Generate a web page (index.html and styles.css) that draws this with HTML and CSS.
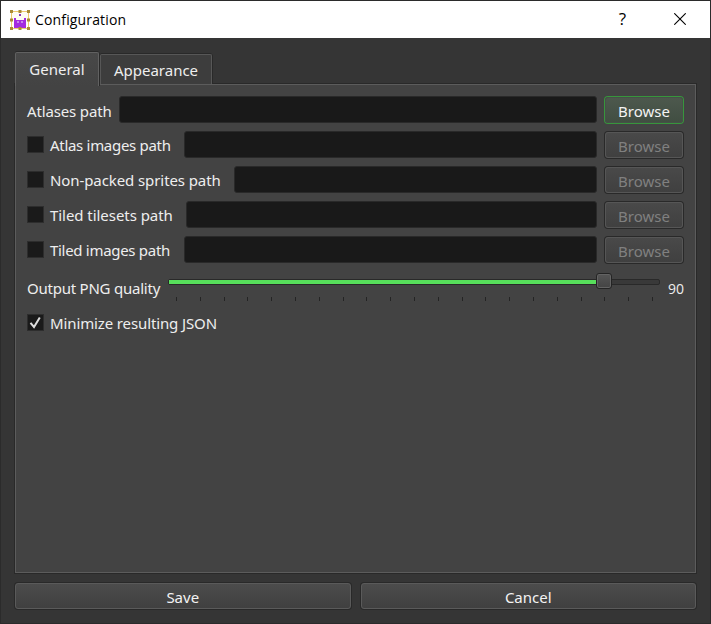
FILE: index.html
```html
<!DOCTYPE html>
<html lang="en">
<head>
<meta charset="utf-8">
<title>Configuration</title>
<link rel="stylesheet" href="styles.css">
</head>
<body>
<div class="window">
  <header class="titlebar">
    <svg class="app-icon" width="20" height="20" viewBox="0 0 20 20">
      <path d="M1.500 1.500h17v17h-17z" fill="#fffdf5" stroke="#f0cc70"/>
      <path d="M4 8h2v2h8V8h2v10H4z" fill="#a32ae0"/>
      <path d="M9 4h2v2H9z" fill="#8d35bd"/>
      <path d="M7 11h2v2H7zM11 11h2v2h-2z" fill="#c983ed"/>
      <path d="M0 0h3v3H0zM8.500 0h3v3h-3zM17 0h3v3h-3zM0 8.500h3v3H0zM17 8.500h3v3h-3zM0 17h3v3H0zM8.500 17h3v3h-3zM17 17h3v3h-3z" fill="#a98b37"/>
    </svg>
    <h1 class="title">Configuration</h1>
    <span class="help">?</span>
    <svg class="close" width="12" height="12" viewBox="0 0 12 12"><path d="M.3.3l11.400 11.400M11.700.3L.3 11.700" stroke="#000" stroke-width="1.100"/></svg>
  </header>
  <main class="client">
    <nav class="tabs">
      <div class="tab active"><span>General</span></div>
      <div class="tab"><span>Appearance</span></div>
    </nav>
    <section class="panel">
      <div class="row"><span class="label t-atlases">Atlases path</span><div class="field"></div><button class="btn browse focused">Browse</button></div>
      <div class="row option w-images"><i class="check"></i><span class="label t-images">Atlas images path</span><div class="field"></div><button class="btn browse" disabled>Browse</button></div>
      <div class="row option w-sprites"><i class="check"></i><span class="label t-sprites">Non-packed sprites path</span><div class="field"></div><button class="btn browse" disabled>Browse</button></div>
      <div class="row option w-tilesets"><i class="check"></i><span class="label t-tilesets">Tiled tilesets path</span><div class="field"></div><button class="btn browse" disabled>Browse</button></div>
      <div class="row option w-images"><i class="check"></i><span class="label t-images">Tiled images path</span><div class="field"></div><button class="btn browse" disabled>Browse</button></div>
      <div class="quality">
        <span class="label t-quality">Output PNG quality</span>
        <div class="slider">
          <div class="groove"><div class="fill"></div></div>
          <div class="handle"></div>
          <div class="ticks"><i></i><i></i><i></i><i></i><i></i><i></i><i></i><i></i><i></i><i></i><i></i><i></i><i></i><i></i><i></i><i></i><i></i><i></i><i></i><i></i><i></i></div>
        </div>
        <span class="value">90</span>
      </div>
      <div class="row option minimize"><i class="check"><svg width="17" height="17" viewBox="0 0 17 17"><path d="M3.500 8.800L7 13L12.800 3.500" fill="none" stroke="#ddd" stroke-width="2"/></svg></i><span class="label t-minimize">Minimize resulting JSON</span></div>
    </section>
    <footer class="actions"><button class="btn">Save</button><button class="btn">Cancel</button></footer>
  </main>
</div>
</body>
</html>
```
FILE: styles.css
```css
* { box-sizing: border-box; }
body { margin: 0; background: #353535; font: 15px/20px "Noto Sans", sans-serif; color: #eee; overflow: hidden; }
.window { width: 711px; height: 624px; border: 1px solid #2b2b2b; display: flex; flex-direction: column; }
.titlebar { height: 37px; background: #fff; color: #000; display: flex; align-items: center; padding: 0 24px 0 9px; }
.app-icon { margin-right: 5px; }
.title { margin: 0; font: 14px/20px "Open Sans", sans-serif; letter-spacing: .15px; white-space: nowrap; }
.help { margin: -2px 48px 0 auto; font: 17px/20px "Open Sans", sans-serif; }
.close { margin-top: -1px; }
.client { flex: 1; display: flex; flex-direction: column; padding: 13px; background: #353535; }
.tabs { display: flex; align-items: flex-end; height: 33px; position: relative; z-index: 1; margin-bottom: -1px; }
.tab { height: 30px; width: 112px; margin-left: 1px; display: flex; align-items: center; justify-content: center; white-space: nowrap; background: #3d3d3d; border: 1px solid #575757; border-bottom: 0; border-radius: 2px 2px 0 0; box-shadow: 0 -1px #292929, 1px 0 #292929; flex-shrink: 0; }
.tab.active { width: 84px; height: 34px; background: linear-gradient(#484848, #434343); padding-bottom: 2px; margin-bottom: -2px; border-color: #616161; }
.panel { flex-shrink: 0; height: 491px; border: 1px solid #292929; background: #434343; box-shadow: inset 0 0 0 1px #5c5c5c; padding: 12px; }
.row { display: flex; height: 28px; margin-bottom: 7px; }
.label { white-space: nowrap; line-height: 28px; flex: none; }
.row > .t-atlases { width: 92px; padding-top: 1px; letter-spacing: -.15px; }
.t-images { letter-spacing: -.3px; }
.t-sprites { letter-spacing: -.09px; }
.t-tilesets { letter-spacing: -.05px; }
.t-quality { letter-spacing: -.23px; }
.t-minimize { letter-spacing: -.12px; }
.check { width: 17px; height: 17px; margin: 5px 6px 0 0; flex: none; border: 1px solid #2d2d2d; background: #1a1a1a; }
.check svg { display: block; margin: -1px; }
.w-images .label { width: 134px; }
.w-sprites .label { width: 184px; }
.w-tilesets .label { width: 136px; }
.field { flex: 1; height: 27px; border: 1px solid #292929; border-radius: 3px; background: #191919; margin-right: 8px; }
.btn { font: inherit; color: #f3f3f3; padding: 2px 0 0; border: 1px solid #5a5a5a; border-radius: 3px; background: linear-gradient(#4c4c4c, #404040); box-shadow: 0 0 0 1px #292929; }
.browse { width: 78px; height: 26px; margin: 1px 1px 0 0; flex: none; padding: 1px 0 0; }
.browse:disabled { color: #808080; border-color: #565656; background: linear-gradient(#494949, #404040); }
.focused { border: 1px solid #465047; background: linear-gradient(#4d584d, #414e42); box-shadow: 0 0 0 1px #37963c; }
.quality { display: flex; height: 38px; }
.quality > .label { width: 141px; padding-top: 3px; }
.slider { width: 492px; position: relative; padding-top: 8px; }
.groove { height: 6px; border: 1px solid #292929; border-radius: 2px; background: #393939; }
.fill { width: 427px; height: 4px; background: #57df5b; }
.handle { position: absolute; left: 428px; top: 2px; width: 16px; height: 16px; border: 1px solid #242424; border-radius: 3px; background: linear-gradient(#555, #444); box-shadow: inset 0 0 0 1px #636363; }
.ticks { display: flex; justify-content: space-between; padding: 0 7px 0 8px; margin-top: 12px; }
.ticks i { width: 1px; height: 4px; background: #242424; }
.value { margin-left: 8px; padding-top: 8px; font: 14px/20px "Open Sans", sans-serif; }
.actions { display: flex; gap: 10px; margin: 9px 1px 0; }
.actions .btn { flex: 1; height: 26px; padding-top: 1px; }
```
